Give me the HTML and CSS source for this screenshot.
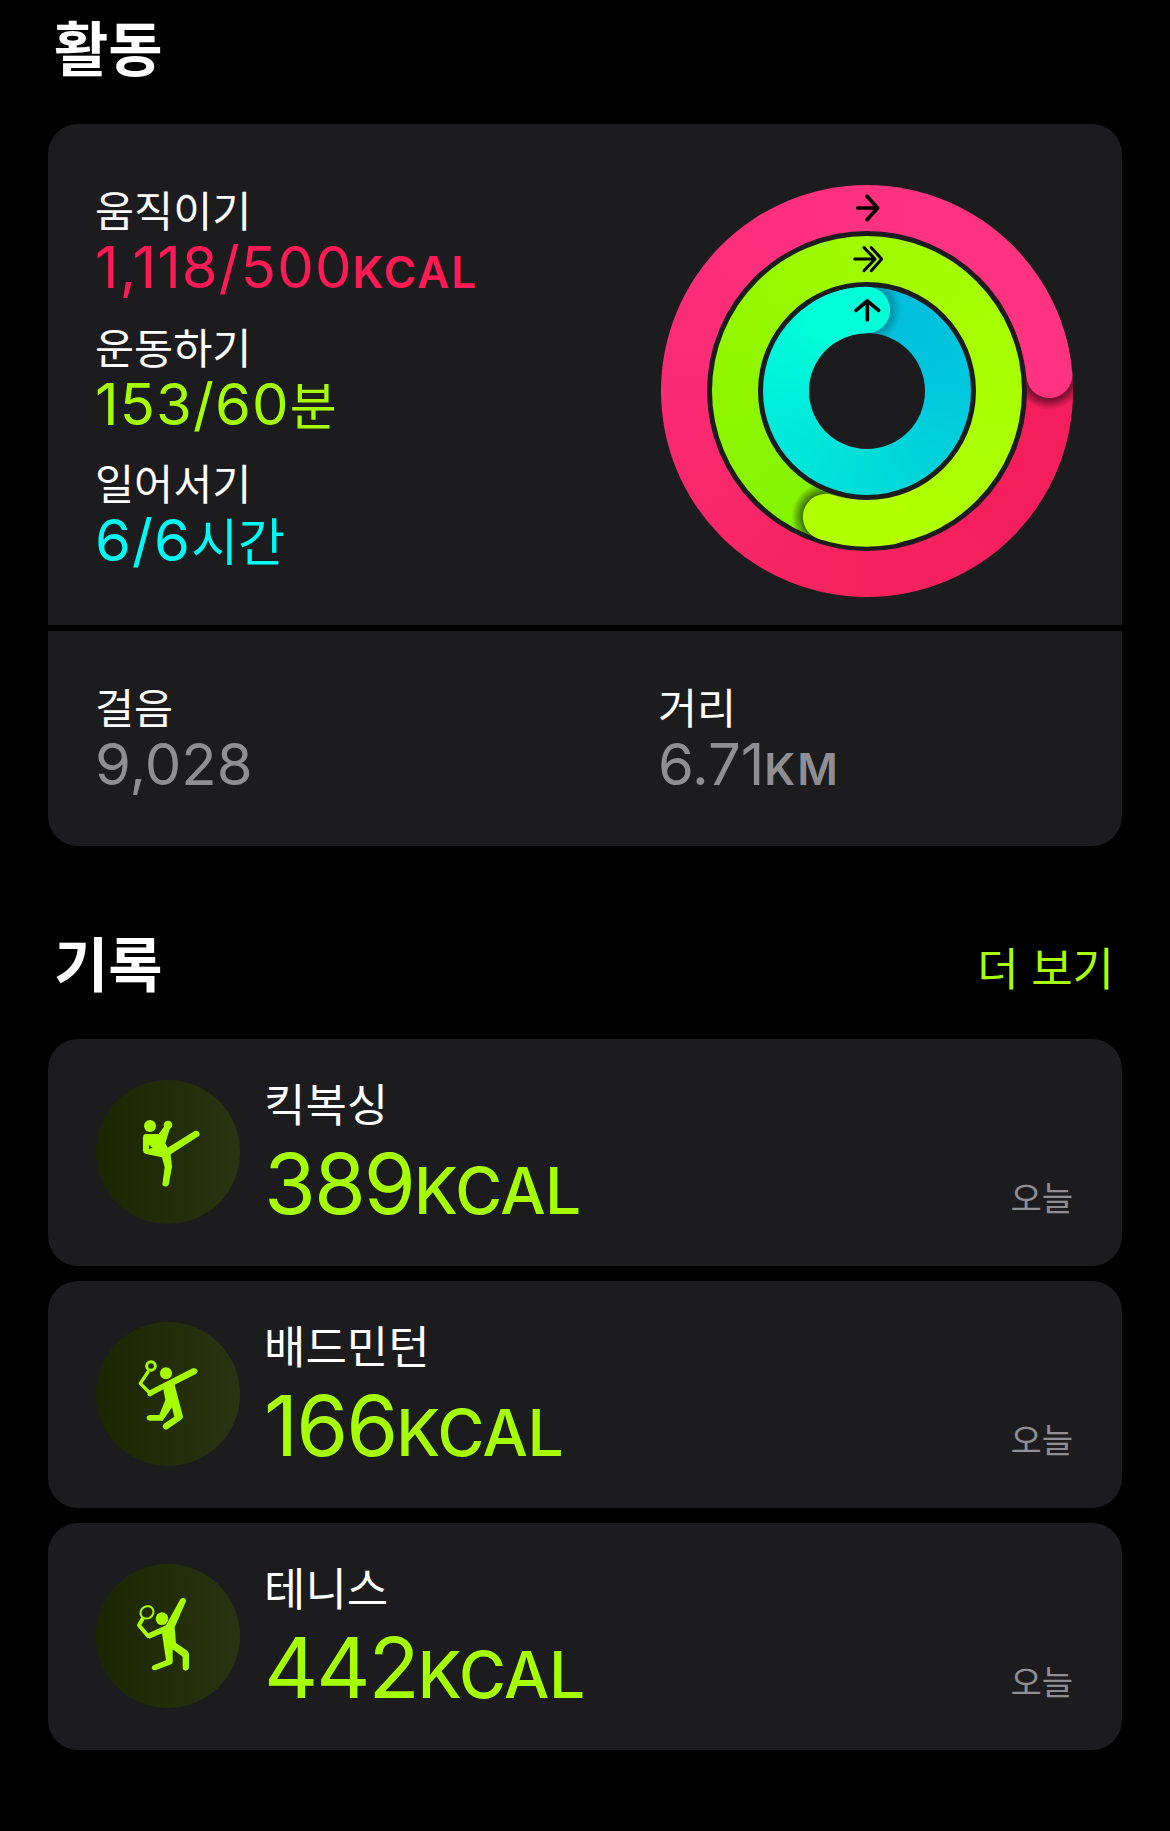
FILE: index.html
```html
<!DOCTYPE html>
<html lang="ko">
<head>
  <meta charset="UTF-8">
  <title>활동</title>
  <link rel="stylesheet" href="styles.css">
</head>
<body>

  <h2 class="title title-top">활동</h2>

  <section class="card activity">
    <div class="activity-top">
      <div class="goals">
        <div class="goal">
          <div class="label">움직이기</div>
          <div class="value move">1,118/500<span class="unit">KCAL</span></div>
        </div>
        <div class="goal">
          <div class="label">운동하기</div>
          <div class="value exercise">153/60<span class="unit-kr">분</span></div>
        </div>
        <div class="goal">
          <div class="label">일어서기</div>
          <div class="value stand">6/6<span class="unit-kr">시간</span></div>
        </div>
      </div>

      <div class="rings">
        <div class="disc disc-move">
          <div class="disc gap-a">
            <div class="disc disc-exercise">
              <div class="disc gap-b">
                <div class="disc disc-stand">
                  <div class="disc hole"></div>
                </div>
              </div>
            </div>
          </div>
        </div>

        <svg class="ring-heads" viewBox="62 45 1236 1236">
          <defs>
            <radialGradient id="headShadow">
              <stop offset="0.66" stop-color="#000" stop-opacity="0.55"/>
              <stop offset="1" stop-color="#000" stop-opacity="0"/>
            </radialGradient>
            <clipPath id="clipMove"><path clip-rule="evenodd" d="M62 663a618 618 0 1 0 1236 0a618 618 0 1 0 -1236 0ZM200 663a480 480 0 1 0 960 0a480 480 0 1 0 -960 0Z"/></clipPath>
            <clipPath id="clipExercise"><path clip-rule="evenodd" d="M214 663a466 466 0 1 0 932 0a466 466 0 1 0 -932 0ZM353 663a327 327 0 1 0 654 0a327 327 0 1 0 -654 0Z"/></clipPath>
            <clipPath id="clipStand"><path clip-rule="evenodd" d="M367 663a313 313 0 1 0 626 0a313 313 0 1 0 -626 0ZM506 663a174 174 0 1 0 348 0a174 174 0 1 0 -348 0Z"/></clipPath>
          </defs>

          <circle cx="1227" cy="615" r="104" fill="url(#headShadow)" clip-path="url(#clipMove)"/>
          <path class="head" stroke="#ff3380" stroke-width="138" d="M1155.4 388.5A549 549 0 0 1 1227 615"/>

          <circle cx="557" cy="1041" r="104" fill="url(#headShadow)" clip-path="url(#clipExercise)"/>
          <path class="head" stroke="#b2ff00" stroke-width="139" d="M749 1054.5A397.5 397.5 0 0 1 557 1041"/>

          <circle cx="680" cy="420" r="104" fill="url(#headShadow)" clip-path="url(#clipStand)" opacity="0.45"/>
          <path class="head" stroke="#00ffd8" stroke-width="139" d="M558.5 452.6A243 243 0 0 1 680 420"/>

          <path class="arrow" d="M652 114H710M680 79L712 114L680 149"/>
          <path class="arrow arrow-thin" d="M643 267H702M671 233L704 267L671 302M693 233L724 267L693 302"/>
          <path class="arrow" d="M681 449V393M647 421L681 393L715 421"/>
        </svg>
      </div>
    </div>

    <div class="activity-bottom">
      <div class="stat">
        <div class="label">걸음</div>
        <div class="value gray">9,028</div>
      </div>
      <div class="stat">
        <div class="label">거리</div>
        <div class="value gray">6.71<span class="unit">KM</span></div>
      </div>
    </div>
  </section>

  <div class="section-head">
    <h2 class="title">기록</h2>
    <a class="more">더 보기</a>
  </div>

  <section class="card workout">
    <div class="badge">
      <svg viewBox="48 60 432 432">
        <circle class="fig" cx="210" cy="198" r="18"/>
        <circle class="fig" cx="264" cy="195" r="13"/>
        <path class="fig" fill-rule="evenodd" d="M198 222H236L252 200L270 205L256 250L263 263L344 213Q358 210 359 224Q358 228 352 231L272 283L276 320L266 374Q257 385 247 374L254 322L246 292L198 282Q190 280 189 272V232Q190 222 198 222ZM207 255V266L218 264Z"/>
      </svg>
    </div>
    <div class="workout-text">
      <div class="workout-name">킥복싱</div>
      <div class="workout-value">389<span class="unit">KCAL</span></div>
    </div>
    <div class="when">오늘</div>
  </section>

  <section class="card workout">
    <div class="badge">
      <svg viewBox="48 66 432 432">
        <circle class="fig-line" cx="213" cy="198" r="13" stroke-width="9"/>
        <path class="fig-line" stroke-width="10" d="M204 216L181 250L209 279"/>
        <circle class="fig" cx="258" cy="220" r="18"/>
        <path class="fig" d="M206 272L338 205Q350 202 353 214Q352 220 346 223L284 254L309 350Q309 356 302 360L262 388Q252 392 248 380Q248 374 254 370L283 350L276 322L248 362H210Q200 361 200 354Q200 346 210 345H238L256 300L250 268L212 289Q206 290 202 284Z"/>
      </svg>
    </div>
    <div class="workout-text">
      <div class="workout-name">배드민턴</div>
      <div class="workout-value">166<span class="unit">KCAL</span></div>
    </div>
    <div class="when">오늘</div>
  </section>

  <section class="card workout">
    <div class="badge">
      <svg viewBox="48 72 432 432">
        <ellipse class="fig-line" cx="201" cy="217" rx="20" ry="18" stroke-width="6" transform="rotate(-30 201 217)"/>
        <path class="fig-line" stroke-width="12" d="M188 236L177 256L204 288"/>
        <circle class="fig" cx="246" cy="236" r="19"/>
        <path class="fig" d="M200 282L258 256L301 178Q308 170 316 176Q320 182 316 188L284 262L288 309L322 332Q328 338 327 346V384Q324 392 316 392Q308 391 308 384V350L278 328V366Q278 372 270 374L226 391Q217 392 215 384Q215 378 222 375L258 361L246 280L208 296Z"/>
      </svg>
    </div>
    <div class="workout-text">
      <div class="workout-name">테니스</div>
      <div class="workout-value">442<span class="unit">KCAL</span></div>
    </div>
    <div class="when">오늘</div>
  </section>

</body>
</html>
```

FILE: styles.css
```css
body {
  margin: 0;
  padding: 0 48px 81px;
  background: #000;
  color: #fff;
  font-family: Inter, "Noto Sans CJK KR", sans-serif;
}
.title {
  margin: 0;
  font-size: 59px;
  line-height: 64px;
  font-weight: 700;
  padding-left: 6px;
}
.title-top {
  padding-top: 18px;
  height: 124px;
  box-sizing: border-box;
}
.card {
  background: #1c1c1e;
  border-radius: 30px;
}
.activity-top {
  display: flex;
  justify-content: space-between;
  padding: 61px 49px 28px 47px;
  border-bottom: 6px solid #000;
}
.goals {
  display: flex;
  flex-direction: column;
  gap: 26.5px;
  padding-top: 2px;
}
.label {
  font-size: 42.5px;
  line-height: 50px;
  font-weight: 400;
}
.value {
  font-size: 58px;
  line-height: 60px;
  font-weight: 420;
  letter-spacing: 1.1px;
}
.unit {
  font-size: 44px;
  line-height: 1;
  font-weight: 600;
  letter-spacing: 2px;
}
.unit-kr {
  font-size: 51px;
  line-height: 1;
  letter-spacing: 0;
}
.move { color: #ff1a55; }
.exercise { color: #a6ff00; }
.stand { color: #00fbf6; }
.gray {
  color: #8e8e93;
  letter-spacing: 0;
}

.rings {
  display: grid;
  width: 412px;
  height: 412px;
}
.rings > * {
  grid-area: 1 / 1;
}
.disc {
  display: flex;
  align-items: center;
  justify-content: center;
  border-radius: 50%;
}
.disc-move {
  width: 412px;
  height: 412px;
  background: conic-gradient(from 0deg, #ff3280 0deg, #ff3380 85deg, #f41e5c 88deg, #f41e5c 130deg, #f6235f 190deg, #fb2a74 270deg, #ff3280 360deg);
}
.gap-a {
  width: 320px;
  height: 320px;
  background: #1c1c1e;
}
.disc-exercise {
  width: 310.6px;
  height: 310.6px;
  background: conic-gradient(from 0deg, #a0fa00 0deg, #a8ff00 90deg, #b2ff00 198deg, #84f400 199deg, #8ef600 270deg, #a0fa00 360deg);
}
.gap-b {
  width: 218px;
  height: 218px;
  background: #1c1c1e;
}
.disc-stand {
  width: 208.6px;
  height: 208.6px;
  background: conic-gradient(from 0deg, #00bcdc 0deg, #00c8de 90deg, #00dcd8 180deg, #00f0dc 270deg, #00ffd8 330deg, #00ffd8 360deg);
}
.hole {
  width: 116px;
  height: 116px;
  background: #1c1c1e;
}
.ring-heads {
  width: 412px;
  height: 412px;
}
.head {
  fill: none;
  stroke-linecap: round;
}
.arrow {
  fill: none;
  stroke: #000;
  stroke-width: 11;
  stroke-linecap: round;
  stroke-linejoin: round;
}
.arrow-thin {
  stroke-width: 9;
}

.activity-bottom {
  display: flex;
  padding: 53px 49px 51.5px 47px;
}
.stat {
  flex: none;
  width: 563px;
}

.section-head {
  display: flex;
  justify-content: space-between;
  align-items: center;
  padding: 84px 8px 37px 0;
}
.more {
  color: #a6ff00;
  font-size: 45px;
  line-height: 64px;
  padding-top: 8px;
}

.workout {
  display: flex;
  align-items: center;
  height: 227px;
  padding: 0 49px 0 48px;
  margin-bottom: 15px;
  box-sizing: border-box;
}
.badge {
  flex: none;
  display: flex;
  width: 144px;
  height: 144px;
  border-radius: 50%;
  background: linear-gradient(to right, #1b2600, #2b3312);
}
.badge svg {
  width: 144px;
  height: 144px;
}
.fig {
  fill: #a6ff00;
}
.fig-line {
  fill: none;
  stroke: #a6ff00;
  stroke-linecap: round;
  stroke-linejoin: round;
}
.workout-text {
  flex: 1;
  margin-left: 24px;
  padding-top: 3px;
}
.workout-name {
  font-size: 45px;
  line-height: 54px;
}
.workout-value {
  color: #a6ff00;
  font-size: 84px;
  line-height: 90px;
  font-weight: 380;
  letter-spacing: -2px;
  margin-top: 6px;
}
.workout-value .unit {
  font-size: 64px;
  font-weight: 450;
  letter-spacing: -0.5px;
}
.when {
  align-self: flex-end;
  padding-bottom: 45px;
  color: #8e8e93;
  font-size: 34px;
  line-height: 44px;
}
```
